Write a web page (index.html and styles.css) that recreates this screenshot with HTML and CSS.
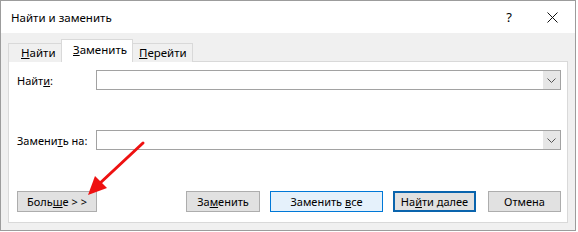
FILE: index.html
```html
<!DOCTYPE html>
<html lang="ru">
  <head>
    <meta charset="UTF-8" />
    <title>Найти и заменить</title>
    <link rel="stylesheet" href="styles.css">
  </head>
  <body>
    <!-- окно диалога -->
    <div class="window">
      <!-- заголовок -->
      <div class="titlebar">
        <span class="title">Найти и заменить</span>
        <span class="help">?</span>
        <span class="close">
          <svg width="11" height="11" viewBox="0 0 11 11">
            <path d="M0.5 0.5L10.5 10.5M10.5 0.5L0.5 10.5" stroke="#111" stroke-width="1" />
          </svg>
        </span>
      </div>

      <div class="body">
        <!-- вкладки -->
        <div class="tabs">
          <div class="tab"><u>Н</u>айти</div>
          <div class="tab active"><u>З</u>аменить</div>
          <div class="tab"><u>П</u>ерейти</div>
        </div>

        <div class="panel">
          <div class="row">
            <label class="label">Найт<u>и</u>:</label>
            <div class="combo">
              <span class="drop">
                <svg width="9" height="5" viewBox="0 0 9 5"><path d="M0.5 0.5L4.5 4.5L8.5 0.5" fill="none" stroke="#555" /></svg>
              </span>
            </div>
          </div>

          <div class="row row-replace">
            <label class="label">Замени<u>т</u>ь на:</label>
            <div class="combo">
              <span class="drop">
                <svg width="9" height="5" viewBox="0 0 9 5"><path d="M0.5 0.5L4.5 4.5L8.5 0.5" fill="none" stroke="#555" /></svg>
              </span>
            </div>
          </div>

          <!-- кнопки -->
          <div class="buttons">
            <button class="btn btn-more">Боль<u>ш</u>е &gt; &gt;</button>
            <div class="spacer"></div>
            <button class="btn btn-replace">За<u>м</u>енить</button>
            <button class="btn btn-all">Заменить <u>в</u>се</button>
            <button class="btn btn-default">На<u>й</u>ти далее</button>
            <button class="btn btn-cancel">Отмена</button>
          </div>
        </div>
      </div>

      <!-- красная стрелка -->
      <svg class="arrow" width="578" height="232" viewBox="0 0 578 232">
        <line x1="143" y1="143" x2="98" y2="185" stroke="#ee1111" stroke-width="3" stroke-linecap="round" />
        <polygon points="88,195 95,176 107,188" fill="#ee1111" />
      </svg>
    </div>
  </body>
</html>
```

FILE: styles.css
```css
* {
  padding: 0;
  margin: 0;
  box-sizing: border-box;
}

body {
  background-color: #fff;
  font-family: "Noto Sans", "Liberation Sans", sans-serif;
  font-size: 11px;
  color: #000;
}

.window {
  position: relative;

  width: 576px;
  height: 231px;
  border: 1px solid #9c9c9c;

  background-color: #f0f0f0;
}

.titlebar {
  display: flex;
  align-items: center;
  height: 32px;
  padding-left: 10px;

  font-size: 11.5px;
  background-color: #fff;
}

.titlebar .title {
  flex: 1;
}

.titlebar .help {
  width: 14px;
  margin-right: 31px;
  font-size: 13px;
  text-align: center;
}

.titlebar .close {
  display: flex;
  width: 11px;
  margin-right: 17px;
}

.body {
  padding: 6px 7px 0 7px;
}

.tabs {
  display: flex;
  align-items: flex-end;
  height: 22px;
}

.tab {
  height: 19px;
  padding: 0 0 0 12px;
  margin-bottom: -1px;
  border: 1px solid #d9d9d9;
  border-bottom: none;

  font-size: 11.5px;
  line-height: 18px;
  background-color: #f0f0f0;
}

.tab:first-child {
  width: 54px;
}

.tab:last-child {
  width: 61px;
  padding-left: 7px;
  border-left: none;
}

.tab.active {
  position: relative;
  z-index: 2;

  width: 72px;
  height: 23px;
  padding-left: 11px;
  margin-left: -1px;
  margin-right: -1px;
  line-height: 20px;

  background-color: #fff;
}

.panel {
  height: 162px;
  padding: 8px 6px 9px 8px;
  border: 1px solid #d9d9d9;

  background-color: #fff;
}

.row {
  display: flex;
  align-items: center;
  height: 20px;
}

.row-replace {
  margin-top: 40px;
}

.label {
  width: 79px;
}

.combo {
  display: flex;
  justify-content: flex-end;
  flex: 1;
  height: 20px;
  border: 1px solid #a2a2a2;
}

.combo .drop {
  display: flex;
  align-items: center;
  justify-content: center;
  width: 17px;
  height: 18px;

  background-color: #e6e6e6;
}

.buttons {
  display: flex;
  align-items: center;
  margin-top: 41px;
  gap: 10px;
}

.spacer {
  flex: 1;
}

.btn {
  height: 21px;
  border: 1px solid #adadad;

  font-family: inherit;
  font-size: 11px;
  color: #000;
  background-color: #e1e1e1;
}

.btn-more {
  width: 80px;
}

.btn-replace {
  width: 74px;
}

.btn-all {
  width: 113px;
  border-color: #0078d7;
  background-color: #e5f1fb;
}

.btn-default {
  width: 83px;
  border: 2px solid #0a64ad;
}

.btn-cancel {
  width: 73px;
  margin-left: 2px;
}

.arrow {
  position: absolute;
  top: -1px;
  left: -1px;
  pointer-events: none;
}
```
